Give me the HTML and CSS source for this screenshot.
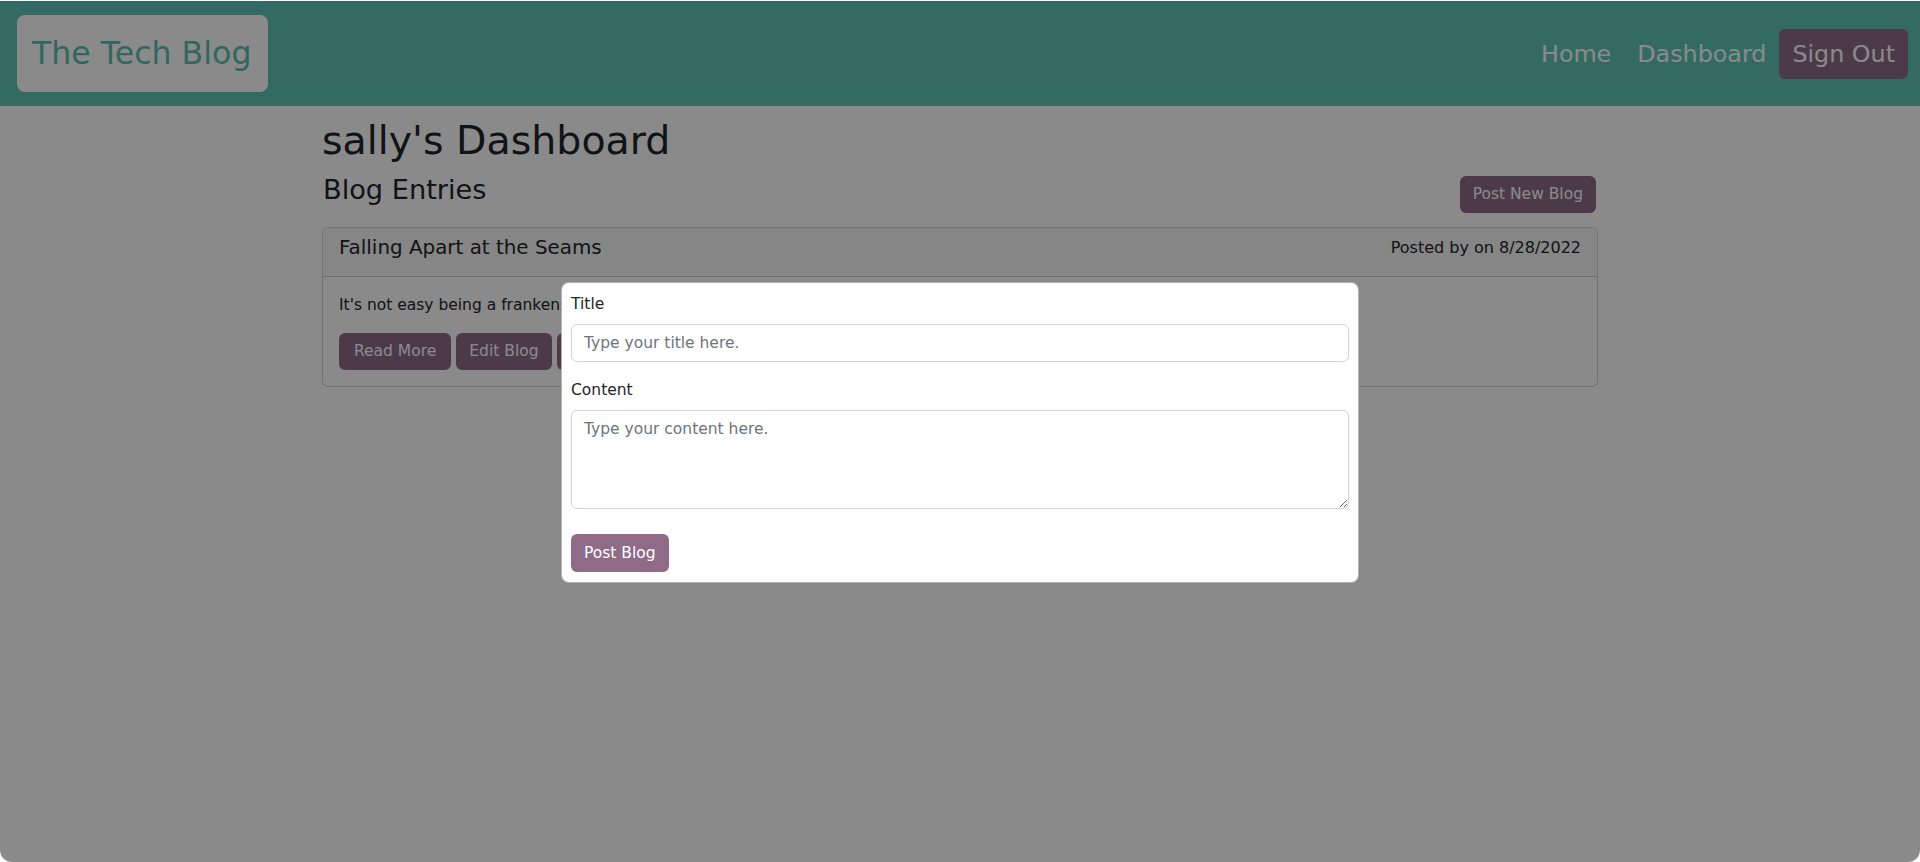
FILE: index.html
```html
<!DOCTYPE html>
<html lang="en">
<head>
<meta charset="utf-8">
<title>The Tech Blog - Dashboard</title>
<link rel="stylesheet" href="styles.css">
</head>
<body>
<div class="frame">
  <header class="navbar">
    <a class="brand" href="#">The Tech Blog</a>
    <nav class="nav">
      <a class="nav-link" href="#">Home</a>
      <a class="nav-link" href="#">Dashboard</a>
      <a class="nav-link nav-btn" href="#">Sign Out</a>
    </nav>
  </header>

  <main class="container">
    <h1 class="page-title">sally's Dashboard</h1>
    <div class="section-head">
      <h3 class="section-title">Blog Entries</h3>
      <button class="btn btn-dark-purple btn-new" type="button">Post New Blog</button>
    </div>

    <article class="card">
      <div class="card-header">
        <h5 class="card-title">Falling Apart at the Seams</h5>
        <span class="card-meta">Posted by on 8/28/2022</span>
      </div>
      <div class="card-body">
        <p class="card-text">It's not easy being a frankenstein monster, everything keeps falling apart.</p>
        <div class="actions">
          <button class="btn btn-dark-purple btn-wide" type="button">Read More</button>
          <button class="btn btn-dark-purple" type="button">Edit Blog</button>
          <button class="btn btn-dark-purple" type="button">Delete Blog</button>
        </div>
      </div>
    </article>
  </main>

  <div class="backdrop"></div>

  <form class="modal">
    <label class="form-label" for="title">Title</label>
    <input class="form-control" id="title" type="text" placeholder="Type your title here.">
    <label class="form-label label-gap" for="content">Content</label>
    <textarea class="form-control textarea" id="content" placeholder="Type your content here."></textarea>
    <button class="btn btn-purple btn-post" type="button">Post Blog</button>
  </form>
</div>
</body>
</html>
```

FILE: styles.css
```css
* {
  box-sizing: border-box;
}

html, body {
  margin: 0;
  padding: 0;
  background: #ffffff;
}

body {
  font-family: "DejaVu Sans", "Liberation Sans", sans-serif;
  font-size: 15.5px;
  line-height: 24px;
  color: #212529;
}

.frame {
  position: relative;
  margin-top: 1px;
  height: 861px;
  overflow: hidden;
  background: #ffffff;
  border-radius: 0 0 12px 12px;
}

/* Navbar */
.navbar {
  height: 105px;
  background: #5ec6b5;
  display: flex;
  align-items: center;
  justify-content: space-between;
  padding: 0 12px 0 17px;
}

.brand {
  display: block;
  background: #ffffff;
  color: #5bbfae;
  text-decoration: none;
  font-size: 31.6px;
  line-height: 45px;
  padding: 16px 12px 16px 15px;
  border-radius: 8px;
  width: 251px;
  white-space: nowrap;
}

.nav {
  display: flex;
  align-items: center;
}

.nav-link {
  color: #ffffff;
  text-decoration: none;
  font-size: 23.8px;
  line-height: 36px;
  padding: 7px 13px;
}

.nav-btn {
  background: #8f6b87;
  border-radius: 6px;
}

/* Content */
.container {
  width: 1276px;
  margin: 0 auto;
}

.page-title {
  margin: 11px 0 10px;
  font-size: 39.5px;
  line-height: 1.2;
  font-weight: 400;
}

.section-head {
  display: flex;
  justify-content: space-between;
  align-items: flex-start;
}

.section-title {
  margin: 0 0 0 1px;
  font-size: 27.2px;
  line-height: 1.2;
  font-weight: 400;
}

.btn {
  font-family: inherit;
  font-size: 15.5px;
  line-height: 23px;
  padding: 6px 12px;
  border: 1px solid transparent;
  border-radius: 6px;
  color: #ffffff;
  cursor: pointer;
}

.btn-dark-purple {
  background: #8f6b87;
}

.btn-purple {
  background: #8f6b87;
}

.btn-wide {
  padding-left: 14px;
  padding-right: 14px;
}

.btn-new {
  margin-top: 2px;
  margin-right: 2px;
}

.card {
  margin-top: 14px;
  border: 1px solid rgba(0, 0, 0, 0.175);
  border-radius: 6px;
  overflow: hidden;
}

.card-header {
  display: flex;
  justify-content: space-between;
  align-items: flex-start;
  padding: 8px 16px;
  background: rgba(0, 0, 0, 0.03);
  border-bottom: 1px solid rgba(0, 0, 0, 0.175);
}

.card-title {
  margin: 0 0 8px;
  font-size: 19.9px;
  line-height: 1.2;
  font-weight: 400;
}

.card-meta {
  font-size: 16px;
  line-height: 24px;
}

.card-body {
  padding: 16px;
}

.card-text {
  margin: 0 0 16px;
}

.actions {
  display: flex;
  gap: 5px;
}

/* Modal overlay */
.backdrop {
  position: absolute;
  inset: 0;
  background: rgba(0, 0, 0, 0.46);
}

.modal {
  position: absolute;
  top: 281px;
  left: 561px;
  width: 798px;
  height: 301px;
  background: #ffffff;
  border: 1px solid rgba(0, 0, 0, 0.3);
  border-radius: 8px;
  padding: 9px;
  display: flex;
  flex-direction: column;
  align-items: flex-start;
}

.form-label {
  display: block;
  font-size: 15.5px;
  line-height: 24px;
  margin-bottom: 8px;
}

.label-gap {
  margin-top: 16px;
}

.form-control {
  display: block;
  width: 100%;
  font-family: inherit;
  font-size: 15.5px;
  line-height: 24px;
  padding: 6px 12px;
  height: 38px;
  color: #212529;
  background: #ffffff;
  border: 1px solid #ced4da;
  border-radius: 6px;
  outline: none;
}

.form-control::placeholder {
  color: #6c757d;
}

.textarea {
  height: 99px;
  resize: vertical;
}

.btn-post {
  margin-top: 25px;
  line-height: 24px;
}
```
